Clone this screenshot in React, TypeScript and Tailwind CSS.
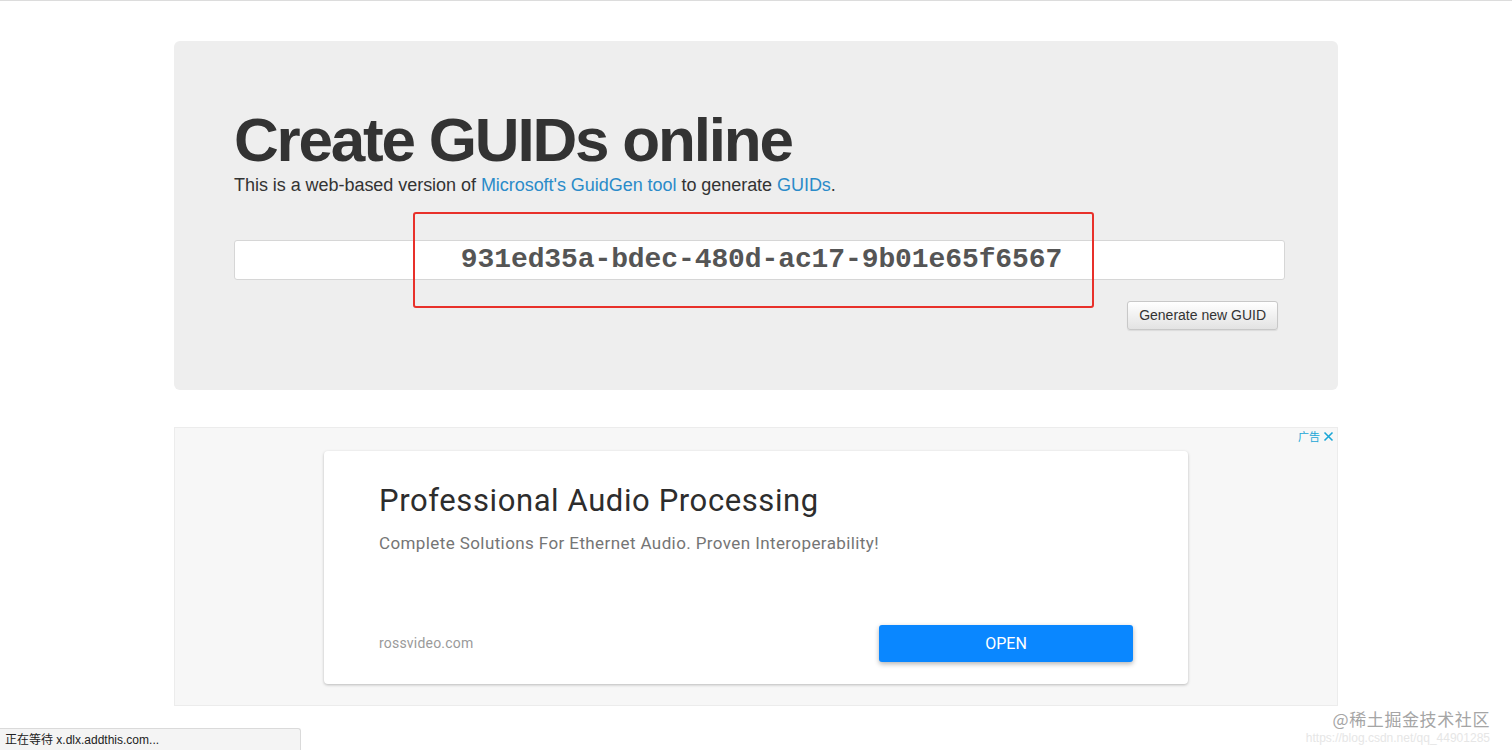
import React from "react";

export default function App() {
  return (
    <div className="relative w-[1512px] h-[750px] overflow-hidden bg-white border-t border-[#dcdcdc]" style={{ fontFamily: '"Liberation Sans", Arial, sans-serif' }}>
      <div className="mx-auto w-[1164px] pt-[40px]">
        {/* Jumbotron */}
        <div className="relative bg-[#eeeeee] rounded-[6px] px-[60px] pt-[64px] pb-[60px]">
          <h1 className="text-[62px] leading-[69px] font-bold text-[#333333] tracking-[-2.2px] m-0">Create GUIDs online</h1>
          <p className="text-[18px] leading-[22px] text-[#333333] mt-0 tracking-[-0.04px]">
            This is a web-based version of <span className="text-[#2a8bc9]">Microsoft's GuidGen tool</span> to generate <span className="text-[#2a8bc9]">GUIDs</span>.
          </p>
          <div className="mt-[44px] w-[1051px] h-[40px] bg-white border border-[#d6d6d6] rounded-[3px] flex items-center justify-center">
            <span className="text-[28px] font-bold text-[#555555] pl-[4px] tracking-[-0.1px]" style={{ fontFamily: '"Liberation Mono", "Courier New", monospace' }}>931ed35a-bdec-480d-ac17-9b01e65f6567</span>
          </div>
          <div className="flex justify-end mt-[21px]">
            <button className="h-[29px] px-[11px] text-[14px] text-[#333333] rounded-[3px] border border-[#c8c8c8] bg-gradient-to-b from-white to-[#e3e3e3] shadow-[0_1px_1px_rgba(0,0,0,0.08)]">Generate new GUID</button>
          </div>
          <div className="absolute left-[239px] top-[171px] w-[681px] h-[96px] border-2 border-[#e8302a] rounded-[3px]" />
        </div>

        {/* Ad */}
        <div className="relative mt-[37px] h-[279px] bg-[#f7f7f7] border border-[#ececec] pt-[23px] flex justify-center">
          <div className="absolute right-[3px] top-[1px] flex items-center gap-[3px] text-[#1aa6d6]">
            <span className="text-[11px] leading-[14px]" style={{ fontFamily: '"Noto Sans CJK SC", sans-serif' }}>广告</span>
            <svg width="11" height="11" viewBox="0 0 11 11" className="mt-[1px]">
              <path d="M1.5 1.5 L9.5 9.5 M9.5 1.5 L1.5 9.5" stroke="#1aa6d6" strokeWidth="1.6" fill="none" />
            </svg>
          </div>
          <div className="w-[864px] h-[233px] bg-white rounded-[4px] shadow-[0_1px_3px_rgba(0,0,0,0.25)] px-[55px] pt-[30px] flex flex-col" style={{ fontFamily: 'Roboto, "Open Sans", sans-serif' }}>
            <div className="text-[31px] leading-[40px] text-[#2d2d2d] tracking-[0.6px]">Professional Audio Processing</div>
            <div className="text-[17px] leading-[20px] text-[#757575] mt-[12px] tracking-[0.4px]">Complete Solutions For Ethernet Audio. Proven Interoperability!</div>
            <div className="flex items-center justify-between mt-auto mb-[22px]">
              <span className="text-[14px] text-[#9a9a9a] tracking-[0.2px]">rossvideo.com</span>
              <div className="w-[254px] h-[37px] bg-[#0a87ff] rounded-[3px] flex items-center justify-center text-white text-[16px] shadow-[0_2px_5px_rgba(0,0,0,0.3)]">OPEN</div>
            </div>
          </div>
        </div>
      </div>

      {/* status bar */}
      <div className="absolute left-0 bottom-0 w-[301px] h-[22px] bg-[#f4f4f4] border-t border-r border-[#dadada] rounded-tr-[3px] flex items-center pl-[5px] text-[12px] text-[#222222]" style={{ fontFamily: '"Liberation Sans", "Noto Sans CJK SC", sans-serif' }}>
        正在等待 x.dlx.addthis.com...
      </div>

      {/* watermark */}
      <div className="absolute right-[22px] bottom-[4px] flex flex-col items-end" style={{ fontFamily: '"Noto Sans CJK SC", sans-serif' }}>
        <span className="text-[17px] leading-[22px] text-[#a5a5a5] tracking-[0.6px]">@稀土掘金技术社区</span>
        <span className="text-[12px] leading-[16px] text-[#e6e6e6]" style={{ fontFamily: '"Liberation Sans", sans-serif' }}>https://blog.csdn.net/qq_44901285</span>
      </div>
    </div>
  );
}
